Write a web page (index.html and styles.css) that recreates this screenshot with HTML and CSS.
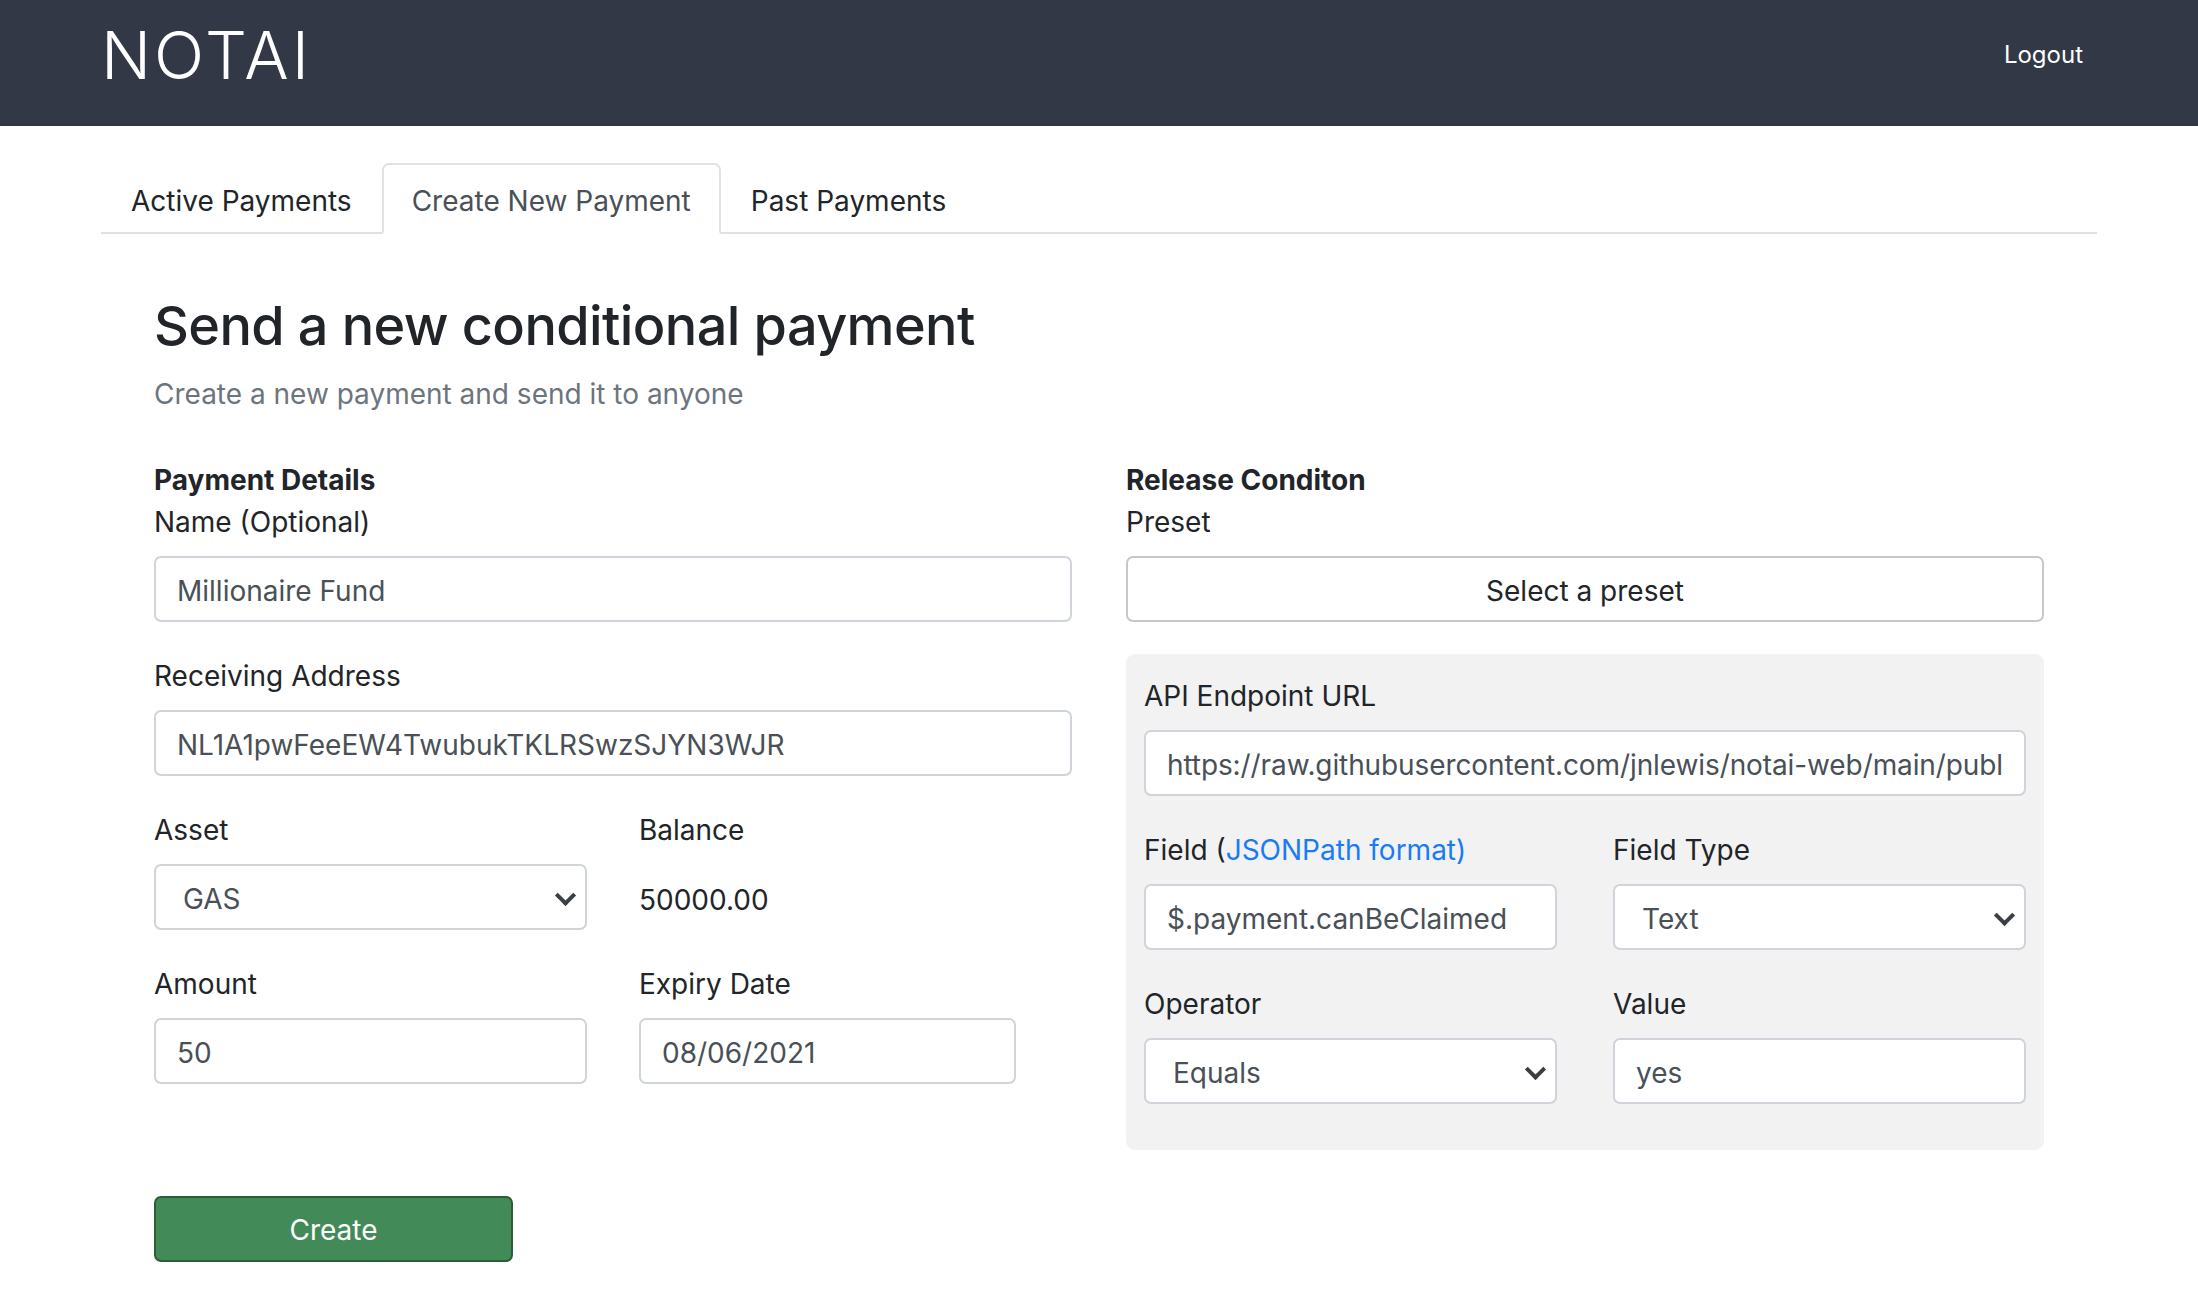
FILE: index.html
```html
<!DOCTYPE html>
<html lang="en">
<head>
<meta charset="utf-8">
<title>NOTAI</title>
<link rel="stylesheet" href="styles.css">
</head>
<body>
<header class="navbar">
  <div class="navbar-inner">
    <a class="brand" href="#">NOTAI</a>
    <a class="nav-logout" href="#">Logout</a>
  </div>
</header>
<main class="main">
  <ul class="tabs">
    <li><a class="tab" href="#">Active Payments</a></li>
    <li><a class="tab tab-active" href="#">Create New Payment</a></li>
    <li><a class="tab" href="#">Past Payments</a></li>
  </ul>
  <section class="panel">
    <h2 class="title">Send a new conditional payment</h2>
    <p class="subtitle">Create a new payment and send it to anyone</p>
    <div class="cols">
      <div class="col">
        <div class="section-title">Payment Details</div>
        <div class="group">
          <label class="label">Name (Optional)</label>
          <input class="input" type="text" value="Millionaire Fund">
        </div>
        <div class="group">
          <label class="label">Receiving Address</label>
          <input class="input" type="text" value="NL1A1pwFeeEW4TwubukTKLRSwzSJYN3WJR">
        </div>
        <div class="pair">
          <div class="group">
            <label class="label">Asset</label>
            <div class="select-wrap">
              <select class="select"><option>GAS</option><option>NEO</option></select>
            </div>
          </div>
          <div class="group">
            <label class="label">Balance</label>
            <div class="plain">50000.00</div>
          </div>
          <div class="group">
            <label class="label">Amount</label>
            <input class="input" type="text" value="50">
          </div>
          <div class="group">
            <label class="label">Expiry Date</label>
            <input class="input input-date" type="text" value="08/06/2021">
          </div>
        </div>
      </div>
      <div class="col">
        <div class="section-title">Release Conditon</div>
        <div class="group">
          <label class="label">Preset</label>
          <button class="preset" type="button">Select a preset</button>
        </div>
        <div class="condition">
          <div class="group">
            <label class="label">API Endpoint URL</label>
            <input class="input input-url" type="text" value="https://raw.githubusercontent.com/jnlewis/notai-web/main/public/sample.json">
          </div>
          <div class="pair pair-wide">
            <div class="group">
              <label class="label">Field (<a class="link" href="#">JSONPath format)</a></label>
              <input class="input" type="text" value="$.payment.canBeClaimed">
            </div>
            <div class="group">
              <label class="label">Field Type</label>
              <div class="select-wrap">
                <select class="select"><option>Text</option><option>Number</option></select>
              </div>
            </div>
            <div class="group">
              <label class="label">Operator</label>
              <div class="select-wrap">
                <select class="select"><option>Equals</option><option>Not Equals</option></select>
              </div>
            </div>
            <div class="group">
              <label class="label">Value</label>
              <input class="input" type="text" value="yes">
            </div>
          </div>
        </div>
      </div>
    </div>
    <button class="btn-create" type="button">Create</button>
  </section>
</main>
</body>
</html>
```

FILE: styles.css
```css
* { box-sizing: border-box; }

body {
  margin: 0;
  background: #ffffff;
  color: #212529;
  font-family: "Inter", "Liberation Sans", sans-serif;
  font-size: 28px;
  line-height: 42px;
}

.navbar {
  background: #323846;
  height: 126px;
  padding-top: 14px;
}

.navbar-inner {
  height: 82px;
  margin: 0 101px;
  display: flex;
  align-items: center;
  justify-content: space-between;
}

.brand {
  color: #ffffff;
  text-decoration: none;
  font-weight: 300;
  font-size: 66px;
  line-height: 82px;
  letter-spacing: 3px;
}

.nav-logout {
  color: #ffffff;
  text-decoration: none;
  font-size: 24px;
  padding-right: 14px;
}

.main {
  margin: 0 101px;
}

.tabs {
  list-style: none;
  margin: 37px 0 0;
  padding: 0;
  display: flex;
  border-bottom: 2px solid #dee2e6;
}

.tab {
  display: block;
  padding: 15px 28px 10px;
  border: 2px solid transparent;
  border-radius: 7px 7px 0 0;
  margin-bottom: -2px;
  color: #212529;
  text-decoration: none;
}

.tab-active {
  color: #495057;
  background: #ffffff;
  border-color: #dee2e6 #dee2e6 #ffffff;
}

.panel {
  padding: 0 53px;
}

.title {
  margin: 58px 0 14px;
  font-size: 54px;
  line-height: 67px;
  font-weight: 500;
  letter-spacing: -0.6px;
}

.subtitle {
  margin: 0 0 43px;
  color: #6c757d;
  height: 42px;
}

.cols {
  display: grid;
  grid-template-columns: 1fr 1fr;
  column-gap: 54px;
  align-items: start;
}

.section-title {
  font-weight: 700;
  padding-top: 1px;
  height: 42px;
}

.group {
  margin-bottom: 32px;
}

.label {
  display: block;
  margin-bottom: 14px;
  padding-top: 1px;
  height: 42px;
}

.input,
.select {
  display: block;
  width: 100%;
  height: 66px;
  border: 2px solid #ced4da;
  border-radius: 7px;
  background: #ffffff;
  color: #495057;
  font-family: inherit;
  font-size: 28px;
  padding: 4px 21px 0;
  outline: none;
}

.input-url {
  letter-spacing: -0.1px;
}

.select {
  -webkit-appearance: none;
  appearance: none;
  padding-left: 27px;
}

.select-wrap {
  position: relative;
}

.select-wrap::after {
  content: "";
  position: absolute;
  right: 14px;
  top: 50%;
  margin-top: -9px;
  width: 11px;
  height: 11px;
  border-right: 4px solid #3a3f45;
  border-bottom: 4px solid #3a3f45;
  transform: rotate(45deg);
  pointer-events: none;
}

.input-date {
  width: 377px;
}

.pair {
  display: grid;
  grid-template-columns: 1fr 1fr;
  column-gap: 52px;
}

.pair-wide {
  column-gap: 56px;
}

.plain {
  height: 66px;
  line-height: 66px;
  padding-top: 3px;
  color: #212529;
}

.preset {
  display: block;
  width: 100%;
  height: 66px;
  padding-top: 4px;
  background: #ffffff;
  border: 2px solid #c8c8c8;
  border-radius: 7px;
  color: #212529;
  font-family: inherit;
  font-size: 28px;
}

.condition {
  background: #f2f2f2;
  border-radius: 9px;
  padding: 20px 18px 14px;
}

.link {
  color: #1a7cf5;
  text-decoration: none;
}

.btn-create {
  display: block;
  margin-top: 46px;
  width: 359px;
  height: 66px;
  padding-top: 3px;
  background: #428a57;
  border: 2px solid #2c5d39;
  border-radius: 7px;
  color: #ffffff;
  font-family: inherit;
  font-size: 28px;
}
```
